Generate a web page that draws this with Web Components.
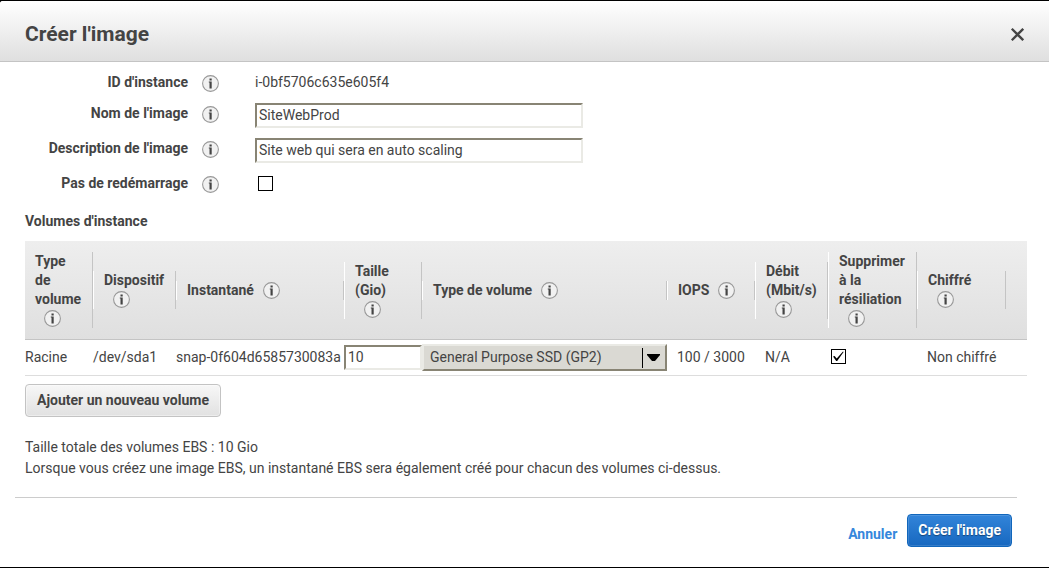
<!DOCTYPE html>
<html lang="fr">
<head>
<meta charset="utf-8">
<meta name="viewport" content="width=device-width, initial-scale=1">
<title>Créer l'image</title>
<style>
html { background: #000; }
body { margin: 0; font: 14px/20px Roboto, "Noto Sans", sans-serif; color: #444; }
</style>
</head>
<body>
<image-dialog></image-dialog>

<template id="t-info">
<style>
:host { display: inline-block; width: 17px; height: 17px; vertical-align: middle; }
svg { display: block; }
</style>
<svg width="17" height="17" viewBox="0 0 17 17" role="img" aria-label="Info">
<circle cx="8.5" cy="8.5" r="7.9" fill="#f1f1f1" stroke="#999" stroke-width="1.1"/>
<path d="M7.5 3.4h2.2v2.2H7.5zM6.8 6.6h2.9v6.8H7.5V7.6h-.7z" fill="#444"/>
</svg>
</template>

<template id="t-row">
<style>
:host { display: grid; grid-template-columns: 163px 36px minmax(0, 1fr); column-gap: 14px; padding-top: 5px; min-height: 30px; }
label { font-weight: 700; text-align: right; line-height: 20px; }
info-icon { margin-top: 3px; }
:host([lead]) { min-height: 26px; }
output { line-height: 20px; display: block; }
.value { margin-left: 3px; }
input[type=text] { display: block; box-sizing: border-box; width: 328px; max-width: 100%; height: 25px; margin: 0; padding: 0 2px 2px; border: 2px solid; border-color: #888474 #eaeae5 #eaeae5 #888474; background: #fff; font: inherit; color: inherit; outline: 0; }
input[type=checkbox] { appearance: none; display: block; box-sizing: border-box; width: 15px; height: 15px; margin: 3px; border: 1px solid #000; background: #fff; }
</style>
<label for="f"></label><info-icon></info-icon><div class="value"></div>
</template>

<template id="t-head">
<style>
:host { display: block; padding: 0 10px; border-left: 1px solid #fff; border-right: 1px solid #c4c4c4; line-height: 19px; font-weight: 700; text-align: left; }
:host([first]) { border-left: 0; }
.box { display: inline-block; height: 19px; vertical-align: top; padding: 1px 0 0 9px; box-sizing: border-box; }
info-icon { display: block; }
</style>
<slot></slot><span class="box"><info-icon></info-icon></span>
</template>

<template id="t-table">
<style>
:host { display: block; }
table { width: 100%; table-layout: fixed; border-collapse: separate; border-spacing: 0; }
th, td { padding: 0; text-align: left; white-space: nowrap; }
th { padding: 11px 0; height: 76px; vertical-align: middle; white-space: normal; border-bottom: 1px solid #c4c4c4; }
thead { background: linear-gradient(#eee, #dfdfdf); }
td { height: 33px; padding-bottom: 2px; border-bottom: 1px solid #ddd; }
td.text { padding-left: 10px; }
td.field { height: 35px; padding-bottom: 0; }
.c1 { width: 68px } .c2 { width: 83px } .c3 { width: 168px } .c4 { width: 78px } .c5 { width: 245px }
.c6 { width: 88px } .c7 { width: 73px } .c8 { width: 89px } .c9 { width: 89px }
input[type=text] { display: block; box-sizing: border-box; width: 100%; height: 25px; margin: 0; padding: 0 2px 2px; border: 2px solid; border-color: #888474 #eaeae5 #eaeae5 #888474; background: #fff; font: inherit; color: inherit; outline: 0; }
.pick { position: relative; }
select { appearance: none; display: block; box-sizing: border-box; width: 100%; height: 27px; margin: 0; padding: 0 30px 2px 6px; border: 2px solid; border-color: #eaeae5 #888474 #888474 #eaeae5; border-radius: 0; background: #dad9d3; font: inherit; color: inherit; outline: 0; }
.pick svg { position: absolute; right: 6px; top: 4px; pointer-events: none; }
.tick { position: relative; width: 15px; height: 15px; margin-left: 3px; }
.tick input { appearance: none; display: block; box-sizing: border-box; width: 15px; height: 15px; margin: 0; border: 1px solid #000; background: #fff; }
.tick svg { position: absolute; inset: 0; pointer-events: none; }
.tick input:not(:checked) + svg { display: none; }
</style>
<table>
<colgroup><col class="c1"><col class="c2"><col class="c3"><col class="c4"><col class="c5"><col class="c6"><col class="c7"><col class="c8"><col class="c9"><col></colgroup>
<thead><tr>
<th><head-cell first>Type de volume</head-cell></th>
<th><head-cell>Dispositif</head-cell></th>
<th><head-cell>Instantané</head-cell></th>
<th><head-cell>Taille (Gio)</head-cell></th>
<th><head-cell>Type de volume</head-cell></th>
<th><head-cell>IOPS</head-cell></th>
<th><head-cell>Débit (Mbit/s)</head-cell></th>
<th><head-cell>Supprimer à la résiliation</head-cell></th>
<th><head-cell>Chiffré</head-cell></th>
<th></th>
</tr></thead>
<tbody><tr>
<td>Racine</td>
<td>/dev/sda1</td>
<td>snap-0f604d6585730083a</td>
<td class="field"><input type="text" value="10" aria-label="Taille (Gio)"></td>
<td class="field"><div class="pick"><select aria-label="Type de volume"><option>General Purpose SSD (GP2)</option></select>
<svg width="19" height="20" viewBox="0 0 19 20"><path d="M0 0h1v20H0z"/><path d="M5 6h13v1l-5 6h-3L5 7z"/></svg></div></td>
<td class="text">100 / 3000</td>
<td class="text">N/A</td>
<td><div class="tick"><input type="checkbox" checked aria-label="Supprimer à la résiliation"><svg width="15" height="15" viewBox="0 0 15 15"><path d="M2 7.4L3.6 7L5.7 9.4L12 2.6L12.6 3L6.2 12H5.2z"/></svg></div></td>
<td class="text">Non chiffré</td>
<td></td>
</tr></tbody>
</table>
</template>

<template id="t-button">
<style>
:host { display: inline-block; }
button { display: block; box-sizing: border-box; height: 33px; margin: 0; padding: 0 11px 2px; border: 1px solid #c3c3c3; border-radius: 4px; background: linear-gradient(#f7f7f7, #e1e1e1); box-shadow: inset 0 0 0 1px #ffffff66; font: inherit; font-weight: 700; color: #444; cursor: pointer; }
:host([primary]) button { padding: 0 10px 2px; border-color: #1166bb; background: linear-gradient(#3284d9, #1768c0); box-shadow: inset 0 0 0 1px #ffffff22; color: #fff; text-shadow: 0 1px 1px #0006; }
</style>
<button type="button"><slot></slot></button>
</template>

<template id="t-dialog">
<style>
:host { display: block; margin: 1px 0; background: #fff; border-radius: 3px 0 0 0; overflow: hidden; }
header { display: flex; align-items: center; justify-content: space-between; height: 60px; padding: 0 25px; border-bottom: 1px solid #c4c4c4; background: linear-gradient(#fff, #dfdfdf); }
h1 { margin: 0; padding-top: 6px; font-size: 21px; line-height: 24px; font-weight: 700; }
.close { display: block; margin: 6px 0 0; padding: 0; border: 0; background: none; cursor: pointer; color: inherit; }
.close svg { display: block; }
main { padding: 5px 22px 0 25px; }
h2 { margin: 8px 0 10px; font-size: 14px; line-height: 20px; font-weight: 700; }
action-button.add { margin-top: 8px; }
p { margin: 0; line-height: 21px; }
.notes { margin-top: 20px; }
footer { display: flex; align-items: center; justify-content: flex-end; margin: 18px 32px 0 15px; padding: 16px 0 20px; border-top: 1px solid #ccc; }
.actions { display: flex; align-items: center; gap: 10px; margin-right: 5px; }
a { padding-top: 6px; font-weight: 700; color: #3587dc; text-decoration: none; }
</style>
<header><h1>Créer l'image</h1>
<button class="close" type="button" aria-label="Fermer"><svg width="14" height="14" viewBox="0 0 14 14"><path d="M1.8 1.8L13.2 13.2M13.2 1.8L1.8 13.2" stroke="#444" stroke-width="2.3"/></svg></button></header>
<main>
<form-row lead label="ID d'instance" kind="static" value="i-0bf5706c635e605f4"></form-row>
<form-row label="Nom de l'image" kind="text" value="SiteWebProd"></form-row>
<form-row label="Description de l'image" kind="text" value="Site web qui sera en auto scaling"></form-row>
<form-row label="Pas de redémarrage" kind="checkbox"></form-row>
<h2>Volumes d'instance</h2>
<volume-table></volume-table>
<action-button class="add">Ajouter un nouveau volume</action-button>
<div class="notes"><p>Taille totale des volumes EBS : 10 Gio</p>
<p>Lorsque vous créez une image EBS, un instantané EBS sera également créé pour chacun des volumes ci-dessus.</p></div>
</main>
<footer><div class="actions"><a href="#">Annuler</a><action-button primary>Créer l'image</action-button></div></footer>
</template>

<script>
class Templated extends HTMLElement {
  constructor() {
    super();
    this.attachShadow({ mode: "open" }).append(
      document.getElementById(this.constructor.template).content.cloneNode(true));
  }
}
class InfoIcon extends Templated { static template = "t-info"; }
class HeadCell extends Templated { static template = "t-head"; }
class VolumeTable extends Templated { static template = "t-table"; }
class ActionButton extends Templated { static template = "t-button"; }
class ImageDialog extends Templated { static template = "t-dialog"; }
class FormRow extends Templated {
  static template = "t-row";
  connectedCallback() {
    const kind = this.getAttribute("kind");
    const value = this.getAttribute("value") || "";
    this.shadowRoot.querySelector("label").textContent = this.getAttribute("label");
    const field = document.createElement(kind === "static" ? "output" : "input");
    field.id = "f";
    if (kind === "static") field.textContent = value;
    else {
      field.type = kind;
      if (kind === "text") field.value = value;
    }
    this.shadowRoot.querySelector(".value").replaceChildren(field);
  }
}
customElements.define("info-icon", InfoIcon);
customElements.define("head-cell", HeadCell);
customElements.define("form-row", FormRow);
customElements.define("volume-table", VolumeTable);
customElements.define("action-button", ActionButton);
customElements.define("image-dialog", ImageDialog);
</script>
</body>
</html>
